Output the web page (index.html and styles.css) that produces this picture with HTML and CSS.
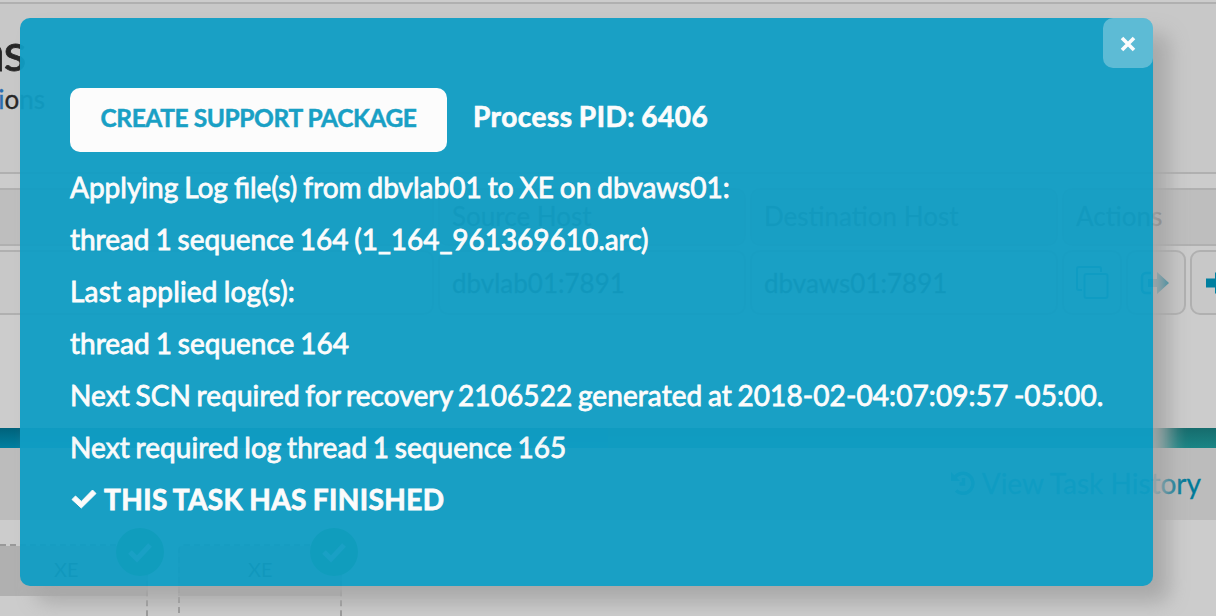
FILE: index.html
```html
<!DOCTYPE html>
<html lang="en">
<head>
<meta charset="utf-8">
<title>Task</title>
<link rel="stylesheet" href="styles.css">
</head>
<body>
<div class="page">
  <header class="heading">
    <div class="heading-title">ns</div>
    <div class="heading-sub"><span class="link">i</span>ons</div>
  </header>
  <div class="table">
    <div class="row row-head">
      <div class="cell"></div><div class="cell">Source Host</div><div class="cell">Destination Host</div><div class="cell cell-actions">Actions</div>
    </div>
    <div class="row">
      <div class="cell"></div><div class="cell">dbvlab01:7891</div><div class="cell">dbvaws01:7891</div>
      <div class="cell cell-icon"><svg width="34" height="34" viewBox="0 0 34 34" fill="none" stroke="#007f9f" stroke-width="2"><path d="M6 24H3a2 2 0 0 1-2-2V3a2 2 0 0 1 2-2h20a2 2 0 0 1 2 2v3"/><rect x="8.500" y="8" width="23" height="24" rx="2"/></svg></div>
      <div class="cell cell-icon"><svg width="30" height="24" viewBox="0 0 30 24"><path d="M11 2H6a4 4 0 0 0-4 4v12a4 4 0 0 0 4 4h5" fill="none" stroke="#007f9f" stroke-width="2.500"/><path d="M8 8h9V1l12 11-12 11v-7H8z" fill="#007f9f"/></svg></div>
      <div class="cell cell-icon cell-last"><svg width="30" height="24" viewBox="0 0 30 24"><path d="M0 7.500h9V1l12 11-12 11v-6.500H0z" fill="#007f9f"/></svg></div>
    </div>
  </div>
  <div class="band"></div>
  <div class="history">
    <svg class="history-icon" width="24" height="24" viewBox="0 0 24 24" fill="none" stroke="#007a99" stroke-width="3.500"><path d="M3.500 7A10 10 0 1 1 5 19.500M12.500 7v6H8.500" /><path d="M0 1v9h9z" fill="#007a99" stroke="none"/></svg>
    <span>View Task History</span>
  </div>
  <div class="tiles">
    <div class="tile tile-first"><div class="tile-name">XE</div><div class="badge"><svg width="26" height="22" viewBox="0 0 26 22"><path d="M3 11l7 7L23 4" fill="none" stroke="#ccc" stroke-width="5"/></svg></div></div>
    <div class="tile"><div class="tile-name">XE</div><div class="badge"><svg width="26" height="22" viewBox="0 0 26 22"><path d="M3 11l7 7L23 4" fill="none" stroke="#ccc" stroke-width="5"/></svg></div></div>
  </div>
</div>
<section class="modal">
  <button class="close" aria-label="Close"><svg width="16" height="16" viewBox="0 0 16 16"><path d="M2 2l12 12M14 2L2 14" stroke="#fff" stroke-width="3.600"/></svg></button>
  <div class="modal-top">
    <button class="support"><span>CREATE SUPPORT PACKAGE</span></button>
    <strong class="pid">Process PID: 6406</strong>
  </div>
  <div class="log">
    <p>Applying Log file(s) from dbvlab01 to XE on dbvaws01:</p>
    <p class="applied">thread 1 sequence 164 (1_164_961369610.arc)</p>
    <p class="last">Last applied log(s):</p>
    <p>thread 1 sequence 164</p>
    <p class="next">Next SCN required for recovery 2106522 generated at 2018-02-04:07:09:57 -05:00.</p>
    <p class="next">Next required log thread 1 sequence 165</p>
    <p class="done"><svg width="26" height="20" viewBox="0 0 26 20"><path d="M1 10.500L4.500 7l5.800 5.500L21.500 1 25 4.500 10.300 19z" fill="#fff" stroke="#fff" stroke-linejoin="round"/></svg><strong>THIS TASK HAS FINISHED</strong></p>
  </div>
</section>
</body>
</html>
```
FILE: styles.css
```css
* { box-sizing: border-box; }
body { margin: 0; width: 1216px; height: 616px; overflow: hidden; position: relative; background: #ccc; font-family: Lato, "Noto Sans", sans-serif; color: #262626; }
button { border: 0; padding: 0; font: inherit; }
.page { width: 1216px; height: 616px; overflow: hidden; padding-top: 2px; }
.heading { height: 172px; background: #c8c8c8; border-top: 2px solid #b0b0b0; border-bottom: 2px solid #b0b0b0; padding-top: 16px; }
.heading-title { width: 25px; height: 64px; line-height: 62px; font-size: 53px; letter-spacing: -1.5px; -webkit-text-stroke: .8px; display: flex; justify-content: flex-end; }
.heading-sub { width: 45px; height: 30px; line-height: 30px; font-size: 26px; -webkit-text-stroke: .3px; display: flex; justify-content: flex-end; }
.link { color: #2a6db0; }
.table { padding-top: 14px; height: 254px; }
.row { display: flex; gap: 4px; height: 65px; margin-left: -10px; width: 1260px; font-size: 26px; -webkit-text-stroke: .3px; }
.row-head { height: 58px; margin-bottom: 4px; }
.row-head .cell { background: #bebebe; color: #444; padding-bottom: 2px; }
.cell { width: 308px; border: 2px solid #b0b0b0; border-radius: 10px; background: #c8c8c8; padding-left: 12px; display: flex; align-items: center; flex: none; }
.cell:first-child { width: 444px; }
.cell-actions { width: 200px; }
.cell-icon { width: 60px; }
.cell-last { padding-left: 14px; }
.band { height: 20px; background: linear-gradient(#00627b, #007fa0) left / 50% 100% no-repeat, linear-gradient(#166c6d, #1a8585) right / 50% 100% no-repeat; }
.history { height: 72px; background: #bcbcbc; display: flex; align-items: center; justify-content: flex-end; gap: 7px; padding: 0 15px 2px 0; font-size: 28px; color: #007a99; -webkit-text-stroke: .3px; }
.tiles { display: flex; gap: 30px; padding-top: 24px; margin-left: -16px; }
.tile { width: 164px; height: 90px; border: 2px dashed #999; background: linear-gradient(#b0b0b0 50px, transparent 50px); display: flex; align-items: flex-start; position: relative; border-radius: 6px; }
.tile-name { font-size: 20px; line-height: 24px; padding: 11px 0 0 68px; }
.badge { position: absolute; right: -18px; top: -18px; width: 48px; height: 48px; border-radius: 50%; background: #1b9830; display: flex; align-items: center; justify-content: center; }
.modal { position: absolute; left: 20px; top: 18px; width: 1133px; height: 568px; padding: 70px 50px; border-radius: 10px; background: #109ec5; opacity: .95; color: #fff; box-shadow: 16px 16px 20px #a8a8a8; }
.close { position: absolute; right: 0; top: 0; width: 50px; height: 50px; border-radius: 10px; background: rgba(255,255,255,.3); display: flex; align-items: center; justify-content: center; padding-top: 2px; }
.modal-top { display: flex; gap: 26px; height: 64px; }
.support { width: 377px; height: 64px; padding: 0 0 6px; border-radius: 10px; background: #fff; color: #109ec5; font-size: 24.5px; font-weight: 700; letter-spacing: -.4px; white-space: nowrap; -webkit-text-stroke: .5px; }
.pid { font-size: 28px; line-height: 56px; letter-spacing: .5px; word-spacing: -1px; -webkit-text-stroke: .7px; }
.log { padding-top: 9px; font-size: 28px; word-spacing: -1.2px; -webkit-text-stroke: .8px; }
.log p { margin: 0; height: 52px; line-height: 52px; white-space: nowrap; }
.log .applied { letter-spacing: -.03px; }
.log .last { letter-spacing: .18px; }
.log .next { letter-spacing: .09px; word-spacing: -1.7px; }
.log .done { display: flex; align-items: center; gap: 7px; padding-left: 1px; }
.done strong { letter-spacing: .4px; }
```
